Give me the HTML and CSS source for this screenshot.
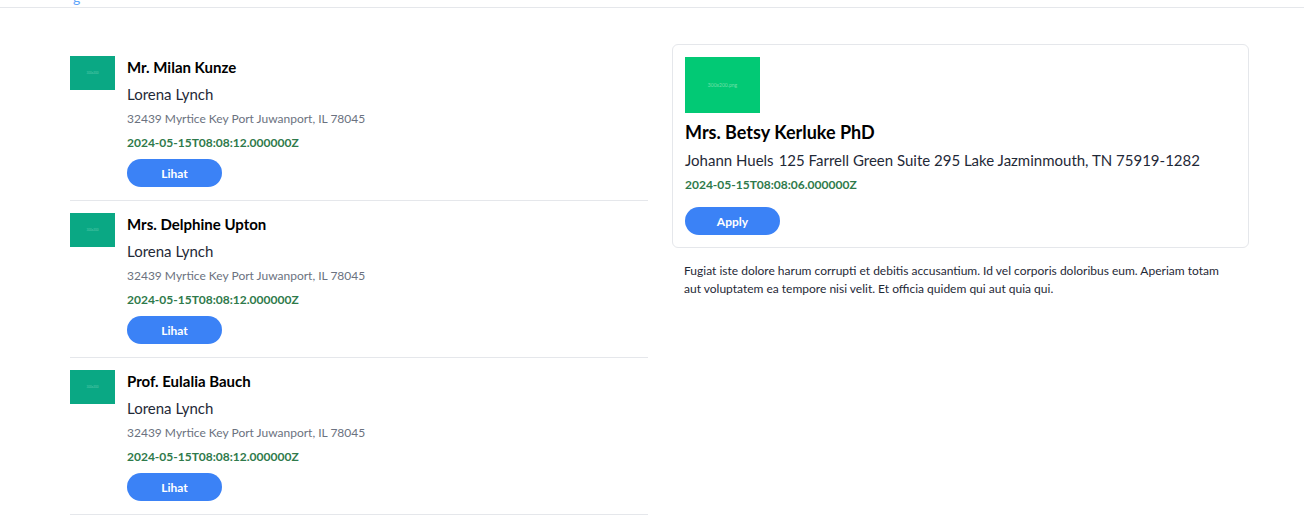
FILE: index.html
```html
<!DOCTYPE html>
<html>
<head>
<meta charset="utf-8">
<link rel="stylesheet" href="styles.css">
</head>
<body>
<header class="topbar"><span class="toplink">g</span></header>
<main class="page">
  <section class="list">
    <article class="item">
      <div class="thumb"><span>300x200</span></div>
      <div class="info">
        <h3 class="name">Mr. Milan Kunze</h3>
        <p class="company">Lorena Lynch</p>
        <p class="addr">32439 Myrtice Key Port Juwanport, IL 78045</p>
        <p class="date">2024-05-15T08:08:12.000000Z</p>
        <button class="btn">Lihat</button>
      </div>
    </article>
    <article class="item">
      <div class="thumb"><span>300x200</span></div>
      <div class="info">
        <h3 class="name">Mrs. Delphine Upton</h3>
        <p class="company">Lorena Lynch</p>
        <p class="addr">32439 Myrtice Key Port Juwanport, IL 78045</p>
        <p class="date">2024-05-15T08:08:12.000000Z</p>
        <button class="btn">Lihat</button>
      </div>
    </article>
    <article class="item">
      <div class="thumb"><span>300x200</span></div>
      <div class="info">
        <h3 class="name">Prof. Eulalia Bauch</h3>
        <p class="company">Lorena Lynch</p>
        <p class="addr">32439 Myrtice Key Port Juwanport, IL 78045</p>
        <p class="date">2024-05-15T08:08:12.000000Z</p>
        <button class="btn">Lihat</button>
      </div>
    </article>
  </section>
  <section class="detail">
    <div class="card">
      <div class="hero"><span>300x200.png</span></div>
      <h2 class="dname">Mrs. Betsy Kerluke PhD</h2>
      <p class="dline"><span>Johann Huels</span><span>125 Farrell Green Suite 295 Lake Jazminmouth, TN 75919-1282</span></p>
      <p class="date">2024-05-15T08:08:06.000000Z</p>
      <button class="btn apply">Apply</button>
    </div>
    <p class="desc">Fugiat iste dolore harum corrupti et debitis accusantium. Id vel corporis doloribus eum. Aperiam totam aut voluptatem ea tempore nisi velit. Et officia quidem qui aut quia qui.</p>
  </section>
</main>
</body>
</html>
```
FILE: styles.css
```css
* { box-sizing: border-box; }
body {
  margin: 0;
  background: #fff;
  font-family: Lato, "Noto Sans", sans-serif;
  color: #111827;
}
.topbar {
  height: 8px;
  border-bottom: 1px solid #e5e7eb;
  overflow: hidden;
  padding-left: 73px;
}
.toplink {
  display: block;
  color: #60a5fa;
  font-size: 14px;
  line-height: 14px;
  margin-top: -9px;
}
.page {
  display: grid;
  grid-template-columns: 578px 577px;
  column-gap: 24px;
  margin: 36px 0 0 70px;
  align-items: start;
}
.item {
  display: flex;
  gap: 12px;
  padding: 12px 0 13px;
  border-bottom: 1px solid #e5e7eb;
}
.thumb {
  width: 45px;
  height: 34px;
  flex: none;
  background: #0aa884;
  display: flex;
  align-items: center;
  justify-content: center;
}
.thumb span, .hero span {
  font-size: 3px;
  color: #5fc9ad;
}
.hero span { font-size: 5px; color: #6fe0a8; }
.info p, .info h3, .card p, .card h2 { margin: 0; }
.name {
  font-size: 15px;
  font-weight: 700;
  line-height: 22px;
  color: #000;
}
.company {
  font-size: 15px;
  line-height: 22px;
  margin-top: 5px !important;
  color: #1f2937;
}
.addr {
  font-size: 12px;
  line-height: 18px;
  margin-top: 5px !important;
  color: #6b7280;
}
.date {
  font-size: 12px;
  line-height: 18px;
  font-weight: 700;
  color: #2f7a4b;
  margin-top: 6px !important;
}
.btn {
  display: block;
  width: 95px;
  height: 28px;
  margin-top: 7px;
  border: none;
  border-radius: 14px;
  background: #3b82f6;
  color: #fff;
  font-family: inherit;
  font-size: 12px;
  font-weight: 700;
  padding: 0;
}
.card {
  border: 1px solid #e5e7eb;
  border-radius: 6px;
  padding: 12px 12px 12px;
}
.hero {
  width: 75px;
  height: 56px;
  background: #02c975;
  display: flex;
  align-items: center;
  justify-content: center;
}
.dname {
  font-size: 18px;
  font-weight: 700;
  line-height: 26px;
  margin-top: 6px !important;
  color: #000;
}
.dline {
  font-size: 15px;
  line-height: 22px;
  margin-top: 4px !important;
  color: #1f2937;
  display: flex;
  gap: 5px;
}
.card .date { margin-top: 5px !important; }
.apply { margin-top: 13px; }
.desc {
  margin: 14px 0 0;
  padding: 0 12px;
  font-size: 12px;
  line-height: 18px;
  color: #1f2937;
}
```
